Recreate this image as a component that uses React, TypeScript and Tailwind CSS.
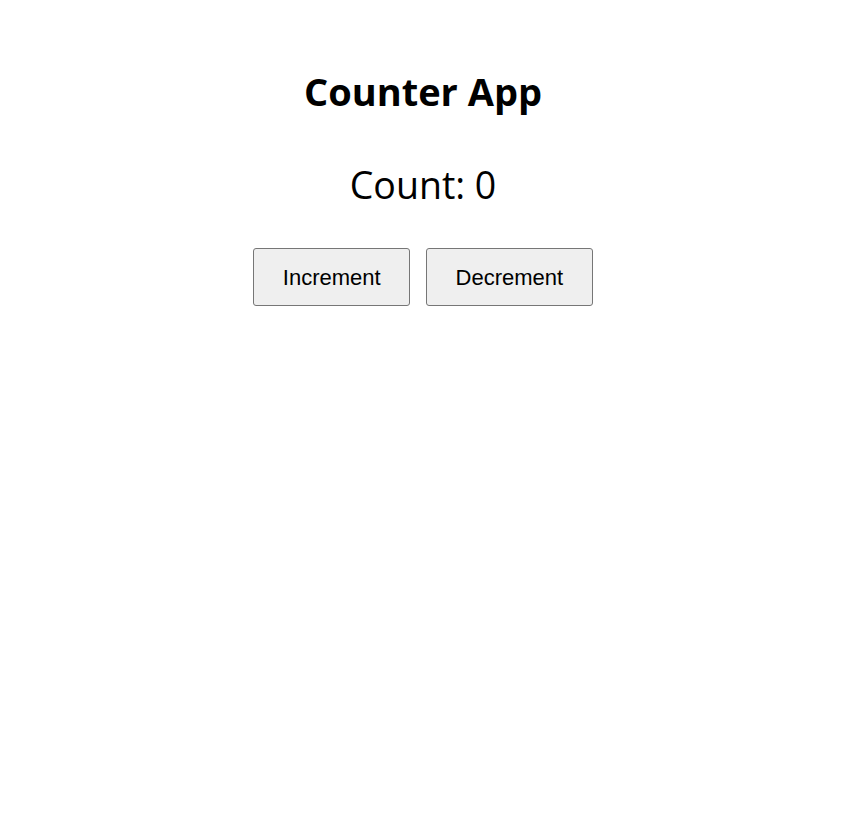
import { useState } from 'react';

export default function App() {
  const [count, setCount] = useState(0);

  return (
    <div className="w-[846px] pt-[63px] text-center text-black font-['Open_Sans',sans-serif]">
      <h1 className="text-[38px] font-bold leading-[56px]">Counter App</h1>
      <p className="mt-[41px] text-[37.5px] leading-[50px]">Count: {count}</p>
      <div className="mt-[38px] flex justify-center gap-4">
        <button
          onClick={() => setCount(count + 1)}
          className="px-[28.5px] py-[15.5px] text-[22px] leading-[25px] font-['Liberation_Sans',Arial,sans-serif] bg-[#efefef] border border-[#767676] rounded-[3px]"
        >
          Increment
        </button>
        <button
          onClick={() => setCount(count - 1)}
          className="px-[28.5px] py-[15.5px] text-[22px] leading-[25px] font-['Liberation_Sans',Arial,sans-serif] bg-[#efefef] border border-[#767676] rounded-[3px]"
        >
          Decrement
        </button>
      </div>
    </div>
  );
}
